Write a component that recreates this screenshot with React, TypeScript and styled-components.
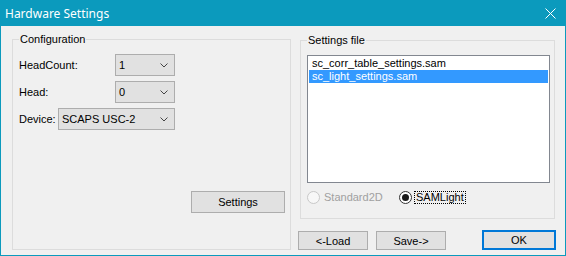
import styled, { createGlobalStyle } from "styled-components";

const GlobalStyle = createGlobalStyle`
    html, body {
        margin: 0;
        padding: 0;
        background: #f0f0f0;
    }
    body {
        font-family: "Liberation Sans", Arial, sans-serif;
        font-size: 11px;
        color: #000;
    }
`;

const Window = styled.div`
    width: 566px;
    height: 256px;
    box-sizing: border-box;
    border: 1px solid #0b9abd;
    border-top: none;
    background: #f0f0f0;
    display: flex;
    flex-direction: column;
`;

const TitleBar = styled.div`
    height: 26px;
    flex: none;
    background: #0b9abd;
    color: #fff;
    display: flex;
    align-items: center;
    justify-content: space-between;
    padding: 0 9px 0 4px;
    font-family: "Noto Sans", "Open Sans", sans-serif;
    font-size: 12px;
`;

const Client = styled.div`
    flex: 1;
    display: flex;
    padding: 7px 0 0 11px;
`;

const Group = styled.fieldset<{ $width: number; $height: number; $offset?: number }>`
    margin: 0 0 0 ${p => p.$offset ?? 0}px;
    padding: 0;
    box-sizing: border-box;
    width: ${p => p.$width}px;
    height: ${p => p.$height}px;
    border: 1px solid #dcdcdc;
    display: flex;
    flex-direction: column;
    min-width: 0;
`;

const Legend = styled.legend`
    margin-left: 6px;
    padding: 0 1px;
    line-height: 13px;
    font-size: 11px;
`;

const ConfigBody = styled.div`
    flex: 1;
    display: flex;
    flex-direction: column;
    gap: 5px;
    padding: 8px 5px 36px 6px;
`;

const Row = styled.div`
    width: 156px;
    display: flex;
    align-items: center;
    justify-content: space-between;
`;

const Combo = styled.div<{ $width: number }>`
    width: ${p => p.$width}px;
    height: 22px;
    box-sizing: border-box;
    border: 1px solid #adadad;
    background: #e1e1e1;
    display: flex;
    align-items: center;
    justify-content: space-between;
    padding: 0 6px 0 3px;
`;

const Button = styled.button<{ $width: number; $default?: boolean }>`
    width: ${p => p.$width}px;
    height: ${p => (p.$default ? 20 : 19)}px;
    box-sizing: border-box;
    margin: 0;
    padding: 0;
    font-family: "Liberation Sans", Arial, sans-serif;
    font-size: 11px;
    color: #000;
    background: #e1e1e1;
    border: ${p => (p.$default ? "2px solid #0078d7" : "1px solid #adadad")};
`;

const SettingsButton = styled(Button)`
    margin-top: auto;
    align-self: flex-end;
    height: 22px;
`;

const RightColumn = styled.div`
    margin-left: 7px;
    padding-top: 1px;
    display: flex;
    flex-direction: column;
`;

const FileBody = styled.div`
    padding: 8px 4px 0 6px;
    display: flex;
    flex-direction: column;
`;

const ListBox = styled.div`
    width: 243px;
    height: 128px;
    box-sizing: border-box;
    border: 1px solid #828790;
    background: #fff;
    padding: 1px;
`;

const ListItem = styled.div<{ $selected?: boolean }>`
    height: 13px;
    line-height: 13px;
    padding-left: 3px;
    background: ${p => (p.$selected ? "#3399ff" : "transparent")};
    color: ${p => (p.$selected ? "#fff" : "#000")};
`;

const RadioRow = styled.div`
    margin-top: 8px;
    display: grid;
    grid-template-columns: 92px auto;
    align-items: center;
    height: 13px;
`;

const RadioItem = styled.div<{ $disabled?: boolean }>`
    display: flex;
    align-items: center;
    gap: 2px;
    color: ${p => (p.$disabled ? "#a0a0a0" : "#000")};
`;

const Circle = styled.span<{ $disabled?: boolean; $checked?: boolean }>`
    width: 13px;
    height: 13px;
    box-sizing: border-box;
    border-radius: 50%;
    border: 1px solid ${p => (p.$disabled ? "#c8c8c8" : "#333")};
    background: ${p => (p.$disabled ? "#f7f7f7" : "#fff")};
    display: flex;
    align-items: center;
    justify-content: center;
    &::after {
        content: "";
        display: ${p => (p.$checked ? "block" : "none")};
        width: 7px;
        height: 7px;
        border-radius: 50%;
        background: #1a1a1a;
    }
`;

const RadioLabel = styled.span<{ $focused?: boolean }>`
    padding: 0 1px;
    margin-left: 1px;
    line-height: 11px;
    outline: ${p => (p.$focused ? "1px dotted #000" : "none")};
`;

const ButtonRow = styled.div`
    margin-top: 11px;
    display: flex;
    align-items: flex-end;
    gap: 8px;
`;

const Spacer = styled.div`
    width: 20px;
`;

function Chevron() {
    return (
        <svg width="8" height="5" viewBox="0 0 8 5">
            <polyline points="0.5,0.5 4,4 7.5,0.5" fill="none" stroke="#444" strokeWidth="1" />
        </svg>
    );
}

function CloseIcon() {
    return (
        <svg width="11" height="11" viewBox="0 0 11 11">
            <line x1="0.5" y1="0.5" x2="10.5" y2="10.5" stroke="#fff" strokeWidth="1" />
            <line x1="10.5" y1="0.5" x2="0.5" y2="10.5" stroke="#fff" strokeWidth="1" />
        </svg>
    );
}

function App() {
    return (
        <>
            <GlobalStyle />
            <Window>
                <TitleBar>
                    <span>Hardware Settings</span>
                    <CloseIcon />
                </TitleBar>
                <Client>
                    <Group $width={279} $height={217}>
                        <Legend>Configuration</Legend>
                        <ConfigBody>
                            <Row>
                                <span>HeadCount:</span>
                                <Combo $width={60}><span>1</span><Chevron /></Combo>
                            </Row>
                            <Row>
                                <span>Head:</span>
                                <Combo $width={60}><span>0</span><Chevron /></Combo>
                            </Row>
                            <Row>
                                <span>Device:</span>
                                <Combo $width={117}><span>SCAPS USC-2</span><Chevron /></Combo>
                            </Row>
                            <SettingsButton $width={94}>Settings</SettingsButton>
                        </ConfigBody>
                    </Group>
                    <RightColumn>
                        <Group $width={255} $height={185} $offset={2}>
                            <Legend>Settings file</Legend>
                            <FileBody>
                                <ListBox>
                                    <ListItem>sc_corr_table_settings.sam</ListItem>
                                    <ListItem $selected>sc_light_settings.sam</ListItem>
                                </ListBox>
                                <RadioRow>
                                    <RadioItem $disabled>
                                        <Circle $disabled />
                                        <RadioLabel>Standard2D</RadioLabel>
                                    </RadioItem>
                                    <RadioItem>
                                        <Circle $checked />
                                        <RadioLabel $focused>SAMLight</RadioLabel>
                                    </RadioItem>
                                </RadioRow>
                            </FileBody>
                        </Group>
                        <ButtonRow>
                            <Button $width={70}>&lt;-Load</Button>
                            <Button $width={70}>Save-&gt;</Button>
                            <Spacer />
                            <Button $width={74} $default>OK</Button>
                        </ButtonRow>
                    </RightColumn>
                </Client>
            </Window>
        </>
    );
}

export default App;
